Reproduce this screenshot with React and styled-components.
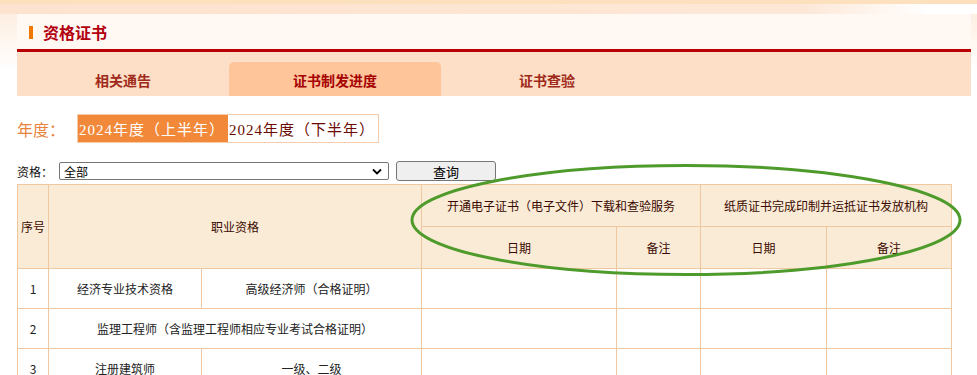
import React from 'react';
import styled, { createGlobalStyle } from 'styled-components';

const GlobalStyle = createGlobalStyle`
  html, body {
    margin: 0;
    padding: 0;
    background: #fff;
  }
  body {
    font-family: "Noto Sans CJK SC", "Noto Sans", sans-serif;
    font-size: 12px;
    color: #333;
  }
`;

const tabs = ['相关通告', '证书制发进度', '证书查验'];

const rows = [
  { no: 1, name: '经济专业技术资格', level: '高级经济师（合格证明）' },
  { no: 2, name: '监理工程师（含监理工程师相应专业考试合格证明）' },
  { no: 3, name: '注册建筑师', level: '一级、二级' },
];

export default function App() {
  return (
    <Page>
      <GlobalStyle />
      <TopBand />
      <Panel>
        <PanelHead>
          <Mark />
          <Title>资格证书</Title>
        </PanelHead>
        <TabBar>
          {tabs.map((t, i) => (
            <Tab key={t} active={i === 1}>{t}</Tab>
          ))}
        </TabBar>
      </Panel>

      <Content>
        <YearRow>
          <YearLabel>年度：</YearLabel>
          <YearBox>
            <YearItem active>2024年度（上半年）</YearItem>
            <YearItem>2024年度（下半年）</YearItem>
          </YearBox>
        </YearRow>

        <FilterRow>
          <FilterLabel>资格：</FilterLabel>
          <Select>
            <span>全部</span>
            <svg width="10" height="7" viewBox="0 0 10 7">
              <path d="M1 1.5 L5 5.5 L9 1.5" fill="none" stroke="#000" strokeWidth="1.8" />
            </svg>
          </Select>
          <QueryButton>查询</QueryButton>
        </FilterRow>

        <TableWrap>
          <Table>
            <colgroup>
              <col style={{ width: 31 }} />
              <col style={{ width: 153 }} />
              <col style={{ width: 220 }} />
              <col style={{ width: 195 }} />
              <col style={{ width: 84 }} />
              <col style={{ width: 126 }} />
              <col style={{ width: 125 }} />
            </colgroup>
            <thead>
              <tr>
                <Th rowSpan={2}>序号</Th>
                <Th rowSpan={2} colSpan={2}>职业资格</Th>
                <Th colSpan={2}>开通电子证书（电子文件）下载和查验服务</Th>
                <Th colSpan={2}>纸质证书完成印制并运抵证书发放机构</Th>
              </tr>
              <tr>
                <Th>日期</Th>
                <Th>备注</Th>
                <Th>日期</Th>
                <Th>备注</Th>
              </tr>
            </thead>
            <tbody>
              {rows.map(r => (
                <tr key={r.no}>
                  <Td>{r.no}</Td>
                  {r.level ? (
                    <>
                      <Td>{r.name}</Td>
                      <Td>{r.level}</Td>
                    </>
                  ) : (
                    <Td colSpan={2}>{r.name}</Td>
                  )}
                  <Td />
                  <Td />
                  <Td />
                  <Td />
                </tr>
              ))}
            </tbody>
          </Table>
          <Circle width="556" height="115" viewBox="0 0 556 115">
            <ellipse cx="278" cy="57" rx="274" ry="54.5" fill="none" stroke="#4e9b2c" strokeWidth="3" />
          </Circle>
        </TableWrap>
      </Content>
    </Page>
  );
}

const Page = styled.div`
  width: 977px;
  height: 375px;
  overflow: hidden;
  background: linear-gradient(to bottom, #fdeadb 0px, #fff 70px);
`;

const TopBand = styled.div`
  height: 10px;
  border-top: 4px solid #fde0bd;
  background: linear-gradient(to right, #fde3cf 0%, #fde7d6 82%, #fff 95%);
`;

const Panel = styled.div`
  margin-left: 17px;
  width: 954px;
`;

const PanelHead = styled.div`
  height: 35px;
  display: flex;
  align-items: center;
  padding-left: 12px;
  background: #fff8f3;
  border-bottom: 3px solid #b80000;
`;

const Mark = styled.span`
  width: 4px;
  height: 13px;
  background: #f07800;
  margin-right: 10px;
  margin-top: 1px;
`;

const Title = styled.h1`
  margin: 0;
  font-size: 16px;
  font-weight: bold;
  color: #b3000f;
`;

const TabBar = styled.div`
  height: 44px;
  display: flex;
  align-items: flex-end;
  background: #fddec6;
`;

const Tab = styled.div`
  width: 212px;
  height: 34px;
  display: flex;
  align-items: center;
  justify-content: center;
  padding-top: 2px;
  box-sizing: border-box;
  font-size: 14px;
  font-weight: bold;
  color: ${p => (p.active ? '#a60000' : '#a02a1a')};
  background: ${p => (p.active ? '#fec49a' : 'transparent')};
  border-radius: 5px 5px 0 0;
`;

const Content = styled.div`
  margin-left: 17px;
`;

const YearRow = styled.div`
  display: flex;
  align-items: center;
  margin-top: 18px;
  height: 29px;
`;

const YearLabel = styled.span`
  width: 60px;
  font-size: 16px;
  color: #e8823a;
`;

const YearBox = styled.div`
  display: flex;
  border: 1px solid #f5ccab;
  height: 27px;
`;

const YearItem = styled.div`
  width: 150px;
  display: flex;
  align-items: center;
  padding-left: 1px;
  box-sizing: border-box;
  font-family: "Liberation Serif", "Noto Sans CJK SC", serif;
  font-size: 15px;
  letter-spacing: 1px;
  color: ${p => (p.active ? '#fff' : '#6b0a00')};
  background: ${p => (p.active ? '#f1883a' : '#fff')};
`;

const FilterRow = styled.div`
  display: flex;
  align-items: center;
  margin-top: 18px;
  height: 20px;
`;

const FilterLabel = styled.span`
  width: 42px;
  font-size: 12px;
  color: #111;
`;

const Select = styled.div`
  width: 330px;
  height: 18px;
  box-sizing: border-box;
  border: 1px solid #767676;
  border-radius: 2px;
  display: flex;
  align-items: center;
  justify-content: space-between;
  padding: 0 6px 0 4px;
  font-size: 12px;
  color: #000;
  background: #fff;
`;

const QueryButton = styled.button`
  margin-left: 7px;
  width: 100px;
  height: 20px;
  box-sizing: border-box;
  border: 1px solid #767676;
  border-radius: 3px;
  background: #efefef;
  font-family: "Noto Sans CJK SC", sans-serif;
  font-size: 13px;
  color: #000;
  padding: 0;
`;

const TableWrap = styled.div`
  position: relative;
  margin-top: 3px;
`;

const Table = styled.table`
  width: 935px;
  table-layout: fixed;
  border-collapse: collapse;
`;

const Th = styled.th`
  height: 41px;
  padding: 0;
  background: #faebd7;
  border: 1px solid #efc8a2;
  font-weight: normal;
  font-size: 12px;
  color: #3a0a00;
  text-align: center;
`;

const Td = styled.td`
  height: 39px;
  padding: 0;
  border: 1px solid #efc8a2;
  font-size: 12px;
  color: #222;
  text-align: center;
`;

const Circle = styled.svg`
  position: absolute;
  left: 391px;
  top: -21px;
  pointer-events: none;
`;
